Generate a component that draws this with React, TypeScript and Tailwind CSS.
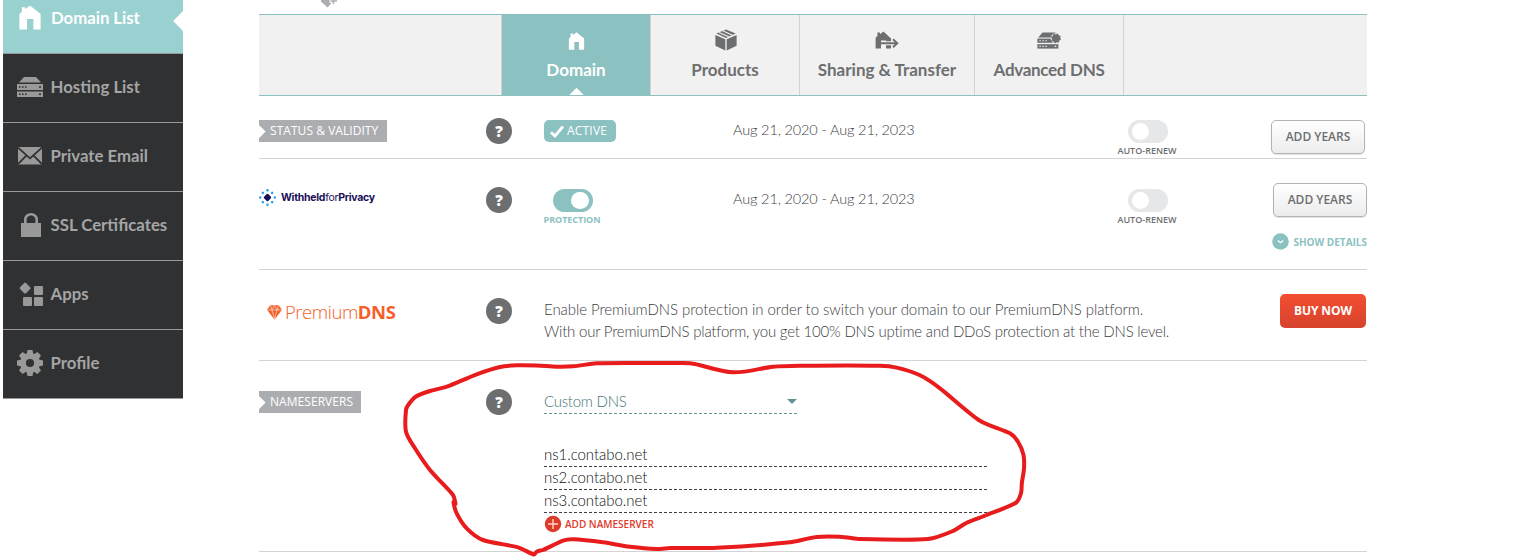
import React from "react";

const sans = "font-['Open_Sans','Noto_Sans',sans-serif]";

/* ---------- icons ---------- */

function House({ className }: { className?: string }) {
  return (
    <svg viewBox="0 0 22 25" className={className} fill="currentColor">
      <path d="M11 0.4 L21.6 9 V24.6 H14.4 V14 H8 V24.6 H0.4 V9 L2.8 7 V2.2 H6.2 V4.2 Z" />
    </svg>
  );
}

function Servers() {
  return (
    <svg width="26" height="20" viewBox="0 0 26 20" fill="currentColor">
      <path d="M7 0h12l5 5.6H2z" />
      <path fillRule="evenodd" d="M0 7h26v6H0zM2 9.2v1.6h1.6V9.2zM5 9.2v1.6h1.6V9.2zM8 9.2v1.6h1.6V9.2zM22 9.2v1.6h2V9.2z" />
      <path fillRule="evenodd" d="M0 14.4h26v5.6H0zM2 16.4V18h1.6v-1.6zM5 16.4V18h1.6v-1.6zM8 16.4V18h1.6v-1.6zM22 16.4V18h2v-1.6z" />
    </svg>
  );
}

function Envelope() {
  return (
    <svg width="24" height="18" viewBox="0 0 24 18">
      <path d="M0 0h24v17.5H0z" fill="currentColor" />
      <path d="M0 0.6 L12 11.4 L24 0.6M0 17 L8.6 8.4M24 17 L15.4 8.4" stroke="#303133" strokeWidth="1.8" fill="none" />
    </svg>
  );
}

function Padlock() {
  return (
    <svg width="20" height="24" viewBox="0 0 20 24" className="ml-[2px]">
      <path d="M0 10h20v14H0z" fill="currentColor" />
      <path d="M4.3 11V6.5a5.7 5.2 0 0 1 11.4 0V11" stroke="currentColor" strokeWidth="2.6" fill="none" />
    </svg>
  );
}

function AppsIcon() {
  return (
    <svg width="24" height="24" viewBox="0 0 24 24" fill="currentColor" className="ml-px">
      <rect x="1.9" y="1.9" width="8.4" height="8.4" rx="1.2" transform="rotate(45 6.1 6.1)" />
      <rect x="15" y="4" width="9" height="9" rx="1.2" />
      <rect x="4" y="15" width="9" height="9" rx="1.2" />
      <rect x="15" y="15" width="9" height="9" rx="1.2" />
    </svg>
  );
}

function Gear() {
  return (
    <svg width="26" height="26" viewBox="-13 -13 26 26">
      <circle r="7" fill="none" stroke="currentColor" strokeWidth="5.8" />
      {[0, 45, 90, 135, 180, 225, 270, 315].map((a) => (
        <path key={a} d="M-3.4 -8.5 L-2.5 -13 H2.5 L3.4 -8.5z" fill="currentColor" transform={`rotate(${a})`} />
      ))}
    </svg>
  );
}

function Box() {
  return (
    <svg width="22" height="22" viewBox="0 0 22 22" fill="currentColor" className="ml-px">
      <path d="M0.4 6 L10.3 10.2 V21.4 L0.4 16.8z" />
      <path d="M21.6 6 L11.7 10.2 V21.4 L21.6 16.8z" />
      <path d="M11 0.4 L20.6 4.6 L11 8.9 L1.4 4.6z" />
      <path d="M4 3.4 L13.8 7.8M7.6 1.8 L17.4 6.2" stroke="#f1f1f1" strokeWidth="1.1" />
    </svg>
  );
}

function HouseArrow() {
  return (
    <svg width="24" height="18" viewBox="0 0 24 18">
      <path d="M8.4 0.4 L16 7.4 V17.4 H11 V9.6 H6 V17.4 H0.6 V6.8 L2.4 5 V1.4 H5 V3.2z" fill="currentColor" />
      <path d="M6 12.2H22M18 8.4L22.3 12.2L18 16" stroke="#f1f1f1" strokeWidth="4" fill="none" />
      <path d="M6 12.2H22M18 8.2L22.3 12.2L18 16.2" stroke="currentColor" strokeWidth="1.9" fill="none" />
    </svg>
  );
}

function ServerGear() {
  return (
    <svg width="24" height="17" viewBox="0 0 24 17">
      <g fill="currentColor">
        <path d="M5.5 0.4h13l2 5.1H1.2z" />
        <path d="M0.4 6.6h21v4.2H0.4z" />
        <path d="M0.4 12.2h21v4.4H0.4z" />
      </g>
      <path d="M2.4 8.8h1.4M5.4 8.8h1.4M8.4 8.8h1.4M2.4 14.4h1.4M5.4 14.4h1.4M8.4 14.4h1.4M17.6 14.4h1.6" stroke="#f1f1f1" strokeWidth="1.1" />
      <circle cx="19" cy="6.3" r="5.3" fill="#f1f1f1" />
      <circle cx="19" cy="6.3" r="4.1" fill="currentColor" />
      <circle cx="19" cy="6.3" r="4.3" fill="none" stroke="currentColor" strokeWidth="1.2" strokeDasharray="1.69 1.69" />
    </svg>
  );
}

function WithheldMark() {
  return (
    <svg width="17" height="17" viewBox="-8.5 -8.5 17 17">
      <rect x="-2.9" y="-2.9" width="5.8" height="5.8" rx="1" fill="#1a0f58" transform="rotate(45)" />
      {[0, 45, 90, 135, 180, 225, 270, 315].map((a) => (
        <circle key={a} cy={a % 90 ? -6.6 : -7.3} r="1.25" fill="#22a0ea" transform={`rotate(${a})`} />
      ))}
    </svg>
  );
}

function Diamond() {
  return (
    <svg width="15" height="15" viewBox="0 0 15 15">
      <path d="M3.2 0.3h8.6L15 4.8 7.5 14.8 0 4.8z" fill="#f4602b" />
      <path d="M0.4 4.9H14.6M3.4 0.6L5 4.9L7.5 14L10 4.9L11.6 0.6M5 4.9L7.5 0.6L10 4.9" stroke="#fff" strokeWidth="0.55" fill="none" />
    </svg>
  );
}

/* ---------- small parts ---------- */

function Help() {
  return (
    <div className={`flex size-[26px] items-center justify-center rounded-full bg-[#6d6e70] text-[15px] leading-none font-extrabold text-white ${sans}`}>
      ?
    </div>
  );
}

function Ribbon({ children, className }: { children: React.ReactNode; className: string }) {
  return (
    <div className={`relative flex h-[22px] items-center overflow-hidden bg-[#acadb1] pl-[11px] text-[12px] tracking-[0.05px] whitespace-nowrap text-white ${sans} ${className}`}>
      <i className="absolute top-[7px] -left-[4px] size-[8.5px] rotate-45 bg-white" />
      {children}
    </div>
  );
}

function Toggle({ on }: { on?: boolean }) {
  return (
    <div className={`flex h-[23px] w-10 items-center rounded-full ${on ? "justify-end bg-[#8bc1c1] pr-1" : "bg-[#e6e7e8] pl-1"}`}>
      <span className="size-[17.5px] rounded-full bg-white" />
    </div>
  );
}

function AutoRenew() {
  return (
    <div className="flex flex-col items-center pl-px">
      <Toggle />
      <span className={`mt-[2px] -ml-px text-[9px] leading-[12px] font-semibold text-[#6d6e70] ${sans}`}>AUTO-RENEW</span>
    </div>
  );
}

function AddYears() {
  return (
    <button className={`h-[34px] w-[94px] rounded-[5px] border border-[#b3b3b3] bg-linear-to-b from-white to-[#ececec] text-[12px] font-semibold text-[#6d6e70] shadow-[0_1px_1px_rgba(0,0,0,0.12)] ${sans}`}>
      ADD YEARS
    </button>
  );
}

function Dates() {
  return <div className="pt-px text-[14.5px] leading-[22px] font-light tracking-[-0.13px] text-[#3c3d3f]">Aug 21, 2020 - Aug 21, 2023</div>;
}

const rowGrid = "grid grid-cols-[227px_58px_189px_356px_116px_1fr] items-start border-b border-[#d4d4d4]";

const nav = [
  { label: "Hosting List", icon: <Servers /> },
  { label: "Private Email", icon: <Envelope /> },
  { label: "SSL Certificates", icon: <Padlock /> },
  { label: "Apps", icon: <AppsIcon /> },
  { label: "Profile", icon: <Gear /> },
];

const tabs = [
  { label: "Products", width: "w-[149px]", tracking: "", icon: <Box /> },
  { label: "Sharing & Transfer", width: "w-[175px]", tracking: "", icon: <HouseArrow /> },
  { label: "Advanced DNS", width: "w-[149px]", tracking: "tracking-[-0.3px]", icon: <ServerGear /> },
];

/* Points of the hand-drawn loop around the nameserver form. */
const loop: [number, number][] = [
  [406, 410], [408.5, 404.5], [416, 396.5], [430, 391], [446.7, 386.7], [476.7, 374.3], [500, 367], [516.7, 365.3],
  [536.7, 365.5], [556.7, 366.7], [573, 366.3], [596.7, 363.3], [650, 363], [683, 363], [695, 364], [733, 372.3],
  [773, 366.7], [800, 365.7], [880, 365.7], [896.7, 367.6], [920, 375.3], [940, 388.3], [980, 420.7], [1010, 433.3],
  [1018, 441.7], [1023.5, 455], [1024, 468.3], [1021.8, 483.3], [1021, 493.3], [1016, 502.7], [986.7, 515], [966.7, 522.7],
  [953, 531], [928, 539], [860, 539], [840, 536.8], [816.7, 537], [790, 542.3], [716.7, 547.7], [670, 548],
  [656.7, 549], [630, 546.7], [603, 542.3], [573, 539.3], [563, 540.7], [543, 550], [537, 551.5], [534, 554.5], [518, 547.3],
  [483, 540], [466.7, 528.3], [456.7, 513.3], [453.5, 502], [455.5, 504], [453, 495], [430, 470], [415, 448.3], [406, 431.7],
];

function smooth(p: [number, number][]) {
  const n = p.length;
  let d = `M${p[0][0]} ${p[0][1]}`;
  for (let i = 0; i < n; i++) {
    const a = p[(i - 1 + n) % n], b = p[i], c = p[(i + 1) % n], e = p[(i + 2) % n];
    const k = Math.hypot(c[0] - b[0], c[1] - b[1]);
    const k0 = Math.min(1, k / Math.hypot(b[0] - a[0], b[1] - a[1])) / 6;
    const k1 = Math.min(1, k / Math.hypot(e[0] - c[0], e[1] - c[1])) / 6;
    d += `C${b[0] + (c[0] - a[0]) * k0} ${b[1] + (c[1] - a[1]) * k0} ${c[0] - (e[0] - b[0]) * k1} ${c[1] - (e[1] - b[1]) * k1} ${c[0]} ${c[1]}`;
  }
  return d + "Z";
}

export default function App() {
  return (
    <div className="relative flex h-[559px] w-[1516px] overflow-hidden bg-white font-['Lato',sans-serif]">
      <nav className="ml-[3px] w-[180px] shrink-0 text-[16.8px] font-bold">
        <a className="relative flex h-[54px] items-center overflow-hidden border-b border-[#999] bg-[#98d1cf] pb-[17px] text-white">
          <span className="flex w-[48px] justify-start pb-px pl-4">
            <House className="h-[25px] w-[22px]" />
          </span>
          <span className="tracking-[-0.05px]">Domain List</span>
          <i className="absolute top-[14px] -right-[7px] size-[14px] rotate-45 bg-white" />
        </a>
        {nav.map((n) => (
          <a key={n.label} className="flex h-[69px] items-center border-b border-[#999] bg-[#303133] pb-[2px] text-[#a5a5a5]">
            <span className="mr-[1.5px] flex w-[46px] justify-center pl-[8px] text-[#999]">{n.icon}</span>
            <span className="whitespace-nowrap">{n.label}</span>
          </a>
        ))}
      </nav>

      <main className="ml-[76px] w-[1108px]">
        <div className="h-[14px] pl-[62px]">
          <svg width="17" height="8" viewBox="0 0 17 8">
            <path d="M0 0H13L6.5 7.6L0 1.6z" fill="#acadb1" />
            <path d="M12 -2V4.5M8.5 1.2H16" stroke="#fff" strokeWidth="3" />
            <path d="M12.5 -2V4M9.5 1H16" stroke="#acadb1" strokeWidth="1.4" />
          </svg>
        </div>

        <div className="flex h-[82px] border-y border-[#8bc1c1] bg-[#f1f1f1] pl-[242px] text-[17px] font-bold text-[#6d6e70]">
          <div className="relative flex w-[149px] flex-col items-center overflow-hidden border-l border-[#d3d3d3] bg-[#8bc1c1] text-white">
            <div className="flex h-[35px] items-end">
              <House className="h-[18px] w-[17px]" />
            </div>
            <div className="mt-[9px] leading-[22px]">Domain</div>
            <i className="absolute -bottom-[6px] size-[11px] rotate-45 bg-white" />
          </div>
          {tabs.map((t) => (
            <div key={t.label} className={`flex flex-col items-center border-l border-[#d3d3d3] whitespace-nowrap ${t.width}`}>
              <div className="flex h-[35px] items-center pt-[15px]">{t.icon}</div>
              <div className={`mt-[9px] leading-[22px] ${t.tracking}`}>{t.label}</div>
            </div>
          ))}
          <div className="border-l border-[#d3d3d3]" />
        </div>

        <section className={`h-[63px] pt-[22px] ${rowGrid}`}>
          <Ribbon className="mt-[2px] w-[128px]">STATUS &amp; VALIDITY</Ribbon>
          <Help />
          <div className={`mt-[2px] flex h-[22px] w-[72px] items-center gap-[3px] rounded-[5px] bg-[#8bc1c1] pl-[6px] text-[12px] tracking-[0.2px] text-white ${sans}`}>
            <svg width="14" height="13" viewBox="0 0 14 13" fill="none">
              <path d="M1 7.2L5 11L13 1.4" stroke="#fff" strokeWidth="2.8" />
            </svg>
            ACTIVE
          </div>
          <Dates />
          <div className="pt-[2px]"><AutoRenew /></div>
          <div className="flex justify-end pt-[2px] pr-[2px]"><AddYears /></div>
        </section>

        <section className={`h-[111px] pt-[28px] ${rowGrid}`}>
          <div className="flex items-center gap-[5px] pt-[2px]">
            <WithheldMark />
            <span className="font-['Inter',sans-serif] text-[10.5px] font-bold tracking-[-0.28px] whitespace-nowrap text-[#1a0f58]">
              Withheld<span className="font-normal">for</span>Privacy
            </span>
          </div>
          <Help />
          <div className="flex w-[57px] flex-col items-center pt-[2px]">
            <Toggle on />
            <span className={`mt-[2px] -ml-px text-[9px] leading-[12px] font-bold tracking-[-0.05px] text-[#8bc1c1] ${sans}`}>PROTECTION</span>
          </div>
          <Dates />
          <div className="pt-[2px]"><AutoRenew /></div>
          <div className="-mt-[4px] flex flex-col items-end">
            <AddYears />
            <div className={`mt-[16px] flex items-center gap-[4px] text-[10px] leading-none font-bold whitespace-nowrap text-[#8bc1c1] ${sans}`}>
              <svg width="17" height="17" viewBox="0 0 17 17">
                <circle cx="8.5" cy="8.5" r="8.3" fill="#8bc1c1" />
                <path d="M5.8 7.5L8.5 9.7L11.2 7.5" stroke="#fff" strokeWidth="1.4" fill="none" />
              </svg>
              SHOW DETAILS
            </div>
          </div>
        </section>

        <section className="grid h-[91px] grid-cols-[227px_58px_1fr_auto] items-start border-b border-[#d4d4d4] pt-[28px]">
          <div className="flex items-center gap-[3px] pt-[2px] pl-[8px] text-[18.5px] leading-[24px] text-[#f4602b]">
            <Diamond />
            <span className={`tracking-[-0.45px] ${sans}`}><span className="font-light">Premium</span><b>DNS</b></span>
          </div>
          <Help />
          <p className="text-[15px] leading-[22px] font-light whitespace-nowrap text-[#3c3d3f]">
            <span className="tracking-[-0.055px]">Enable PremiumDNS protection in order to switch your domain to our PremiumDNS platform.</span>
            <br />
            <span className="tracking-[-0.205px]">With our PremiumDNS platform, you get 100% DNS uptime and DDoS protection at the DNS level.</span>
          </p>
          <button className={`-mt-[4px] mr-px h-[34px] w-[86px] rounded-[5px] bg-linear-to-b from-[#f34e30] to-[#d6432d] text-[12px] font-bold tracking-[-0.1px] text-white ${sans}`}>
            BUY NOW
          </button>
        </section>

        <section className="grid h-[191px] grid-cols-[227px_58px_1fr] items-start border-b border-[#d4d4d4] pt-[28px]">
          <Ribbon className="mt-[2px] w-[102px]">NAMESERVERS</Ribbon>
          <Help />
          <div className="text-[15px] font-light">
            <div className="flex h-[25px] w-[253px] items-center justify-between border-b border-dashed border-[#659492] tracking-[-0.25px] text-[#3f7674]">
              <span>Custom DNS</span>
              <svg width="10" height="5" viewBox="0 0 10 5"><path d="M0 0h10L5 5z" fill="#659492" /></svg>
            </div>
            <ul className="mt-[30px] w-[443px] tracking-[-0.05px] text-[#111]">
              {["ns1.contabo.net", "ns2.contabo.net", "ns3.contabo.net"].map((s) => (
                <li key={s} className="h-[23px] border-b border-dashed border-[#414042] leading-[21px]">{s}</li>
              ))}
            </ul>
            <div className={`mt-[2px] flex items-center gap-[3px] text-[10px] leading-none font-semibold text-[#dd3b2a] ${sans}`}>
              <svg width="18" height="18" viewBox="0 0 18 18">
                <circle cx="9" cy="9" r="8.2" fill="#dd3b2a" />
                <path d="M9 4V14M4 9H14" stroke="#fbd5d0" strokeWidth="1.4" />
              </svg>
              ADD NAMESERVER
            </div>
          </div>
        </section>
      </main>

      <svg className="pointer-events-none absolute inset-0" width="1516" height="559" viewBox="0 0 1516 559">
        <path d={smooth(loop)} fill="none" stroke="#e81c1c" strokeWidth="4" strokeLinejoin="round" />
      </svg>
    </div>
  );
}
